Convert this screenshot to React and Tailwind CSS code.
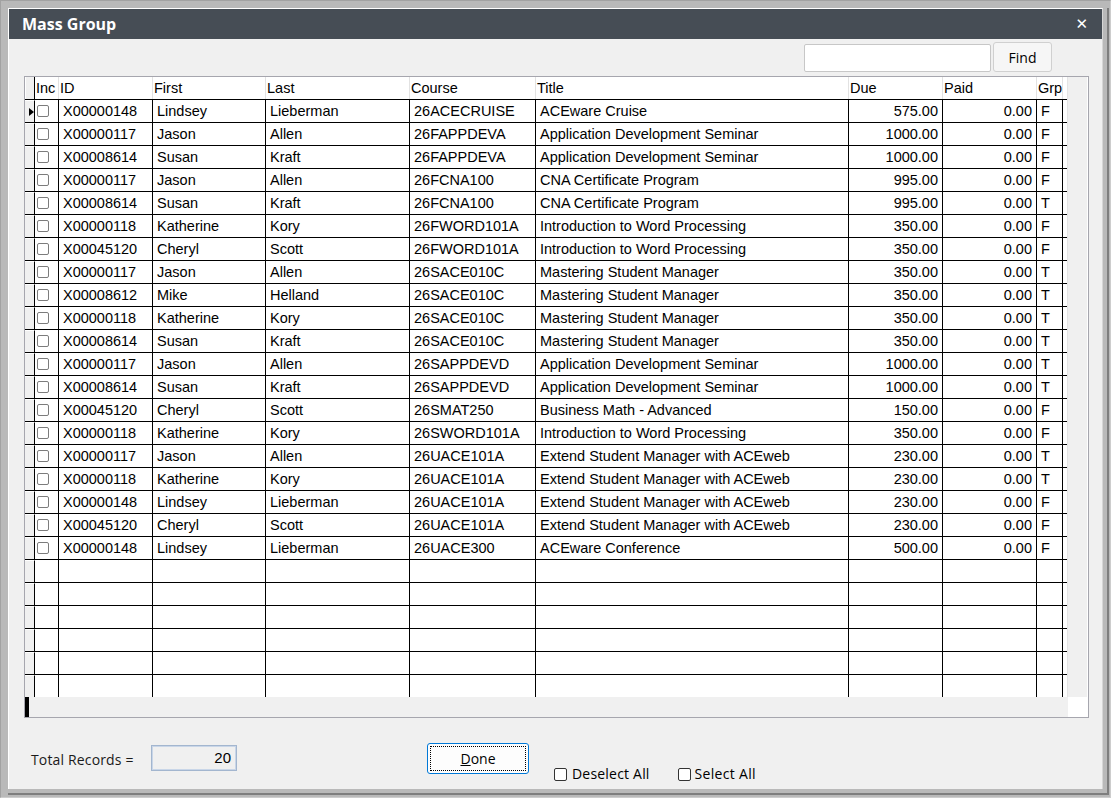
import React from 'react';

const rows = [
  ['X00000148', 'Lindsey', 'Lieberman', '26ACECRUISE', 'ACEware Cruise', '575.00', '0.00', 'F'],
  ['X00000117', 'Jason', 'Allen', '26FAPPDEVA', 'Application Development Seminar', '1000.00', '0.00', 'F'],
  ['X00008614', 'Susan', 'Kraft', '26FAPPDEVA', 'Application Development Seminar', '1000.00', '0.00', 'F'],
  ['X00000117', 'Jason', 'Allen', '26FCNA100', 'CNA Certificate Program', '995.00', '0.00', 'F'],
  ['X00008614', 'Susan', 'Kraft', '26FCNA100', 'CNA Certificate Program', '995.00', '0.00', 'T'],
  ['X00000118', 'Katherine', 'Kory', '26FWORD101A', 'Introduction to Word Processing', '350.00', '0.00', 'F'],
  ['X00045120', 'Cheryl', 'Scott', '26FWORD101A', 'Introduction to Word Processing', '350.00', '0.00', 'F'],
  ['X00000117', 'Jason', 'Allen', '26SACE010C', 'Mastering Student Manager', '350.00', '0.00', 'T'],
  ['X00008612', 'Mike', 'Helland', '26SACE010C', 'Mastering Student Manager', '350.00', '0.00', 'T'],
  ['X00000118', 'Katherine', 'Kory', '26SACE010C', 'Mastering Student Manager', '350.00', '0.00', 'T'],
  ['X00008614', 'Susan', 'Kraft', '26SACE010C', 'Mastering Student Manager', '350.00', '0.00', 'T'],
  ['X00000117', 'Jason', 'Allen', '26SAPPDEVD', 'Application Development Seminar', '1000.00', '0.00', 'T'],
  ['X00008614', 'Susan', 'Kraft', '26SAPPDEVD', 'Application Development Seminar', '1000.00', '0.00', 'T'],
  ['X00045120', 'Cheryl', 'Scott', '26SMAT250', 'Business Math - Advanced', '150.00', '0.00', 'F'],
  ['X00000118', 'Katherine', 'Kory', '26SWORD101A', 'Introduction to Word Processing', '350.00', '0.00', 'F'],
  ['X00000117', 'Jason', 'Allen', '26UACE101A', 'Extend Student Manager with ACEweb', '230.00', '0.00', 'T'],
  ['X00000118', 'Katherine', 'Kory', '26UACE101A', 'Extend Student Manager with ACEweb', '230.00', '0.00', 'T'],
  ['X00000148', 'Lindsey', 'Lieberman', '26UACE101A', 'Extend Student Manager with ACEweb', '230.00', '0.00', 'F'],
  ['X00045120', 'Cheryl', 'Scott', '26UACE101A', 'Extend Student Manager with ACEweb', '230.00', '0.00', 'F'],
  ['X00000148', 'Lindsey', 'Lieberman', '26UACE300', 'ACEware Conference', '500.00', '0.00', 'F'],
];

// column widths include the 1px right grid line
const cols = [
  { label: 'ID', w: 'w-[94px]' },
  { label: 'First', w: 'w-[113px]' },
  { label: 'Last', w: 'w-[144px]' },
  { label: 'Course', w: 'w-[126px]' },
  { label: 'Title', w: 'w-[313px]' },
  { label: 'Due', w: 'w-[94px]', right: true },
  { label: 'Paid', w: 'w-[94px]', right: true },
  { label: 'Grp', w: 'w-[26px]' },
];

const CheckBox = () => (
  <span className="block w-[12px] h-[12px] rounded-[2px] border border-[#7c7c7c] bg-white" />
);

const GridRow = ({ data, current }) => (
  <div className="flex h-[23px] shrink-0 border-b border-black">
    <div className="w-[10px] shrink-0 border-r border-black bg-[#f0f0f0] border-t border-t-white flex items-center justify-end">
      {current && <span className="block w-0 h-0 border-l-[5px] border-l-black border-y-[4px] border-y-transparent" />}
    </div>
    <div className="w-[24px] shrink-0 border-r border-black flex items-center pl-[2px]">
      {data && <CheckBox />}
    </div>
    {cols.map((c, i) => (
      <div
        key={c.label}
        className={`${c.w} shrink-0 border-r border-black flex items-center pt-[2px] overflow-hidden whitespace-nowrap ${c.right ? 'justify-end pr-[4px]' : 'pl-[4px]'}`}
      >
        {data ? data[i] : ''}
      </div>
    ))}
    <div className="w-[4px] shrink-0" />
  </div>
);

export default function App() {
  return (
    <div className="w-[1111px] h-[798px] bg-[#b9b9b9] border-l border-t border-[#a2a2a2] border-r border-b border-r-[#cdcdcd] border-b-[#cdcdcd] pl-[7px] pt-[7px] pr-[1px] pb-[2px] flex">
      <div className="flex-1 flex border-r-2 border-b-2 border-[#7e7e7e] pr-[4px] pb-[4px]">
        <div className="flex-1 flex flex-col border-l border-t border-white border-r border-r-[#d6d6d6] bg-[#f0f0f0]">
          {/* Title bar */}
          <div className="h-[30px] shrink-0 bg-[#464d55] flex items-center justify-between pl-[13px] pr-[14px]">
            <span className="text-white font-bold text-[16px] font-['Open_Sans',sans-serif] leading-none">Mass Group</span>
            <span className="text-white font-bold text-[15px] font-['DejaVu_Sans',sans-serif] leading-none">✕</span>
          </div>

          {/* Find row */}
          <div className="flex items-end justify-end pt-[3px] pr-[50px] h-[33px] shrink-0">
            <input className="w-[187px] h-[28px] bg-white border border-[#c7c7c7] rounded-[2px] outline-none" />
            <button className="ml-[2px] w-[59px] h-[30px] bg-[#f6f6f6] border border-[#d0d0d0] rounded-[3px] text-[14px] text-black font-['Open_Sans',sans-serif]">
              Find
            </button>
          </div>

          {/* Grid */}
          <div className="mt-[4px] ml-[15px] mr-[13px] h-[642px] shrink-0 border border-[#a6a6ae] flex flex-col font-['Liberation_Sans',Arial,sans-serif] text-[14.5px] text-black">
            <div className="flex h-[620px] shrink-0">
              <div className="w-[1042px] shrink-0 bg-white overflow-hidden flex flex-col">
                <div className="flex h-[23px] shrink-0 border-b border-black">
                  <div className="w-[10px] shrink-0 border-r border-black bg-[#f0f0f0] border-l border-l-white" />
                  <div className="w-[24px] shrink-0 border-r border-[#e2e2e2] flex items-center pt-[2px] pl-[1px]">Inc</div>
                  {cols.map((c) => (
                    <div key={c.label} className={`${c.w} shrink-0 border-r border-[#e2e2e2] flex items-center pt-[2px] pl-[1px]`}>
                      {c.label}
                    </div>
                  ))}
                  <div className="w-[4px] shrink-0" />
                </div>
                {rows.map((r, i) => (
                  <GridRow key={i} data={r} current={i === 0} />
                ))}
                {[0, 1, 2, 3, 4, 5].map((i) => (
                  <GridRow key={'e' + i} />
                ))}
              </div>
              <div className="flex-1 bg-[#f0f0f0] border-l border-[#e4e4e4] border-r border-r-white" />
            </div>
            <div className="flex flex-1">
              <div className="flex-1 bg-[#f0f0f0] flex">
                <div className="w-[4px] bg-black" />
              </div>
              <div className="w-[20px] bg-white" />
            </div>
          </div>

          {/* Bottom bar */}
          <div className="flex items-start pl-[22px] font-['Open_Sans',sans-serif] text-[14px] text-black">
            <span className="w-[120px] mt-[32px] leading-[20px] text-[#1a1a1a] tracking-[0.15px]">Total Records =</span>
            <div className="mt-[27px] w-[86px] h-[26px] border border-[#a3b6cf] shadow-[inset_0_0_0_1px_#c9d6e8] bg-[#f0f0f0] flex items-center justify-end pr-[5px] font-['Liberation_Sans',Arial,sans-serif] text-[15px]">
              20
            </div>
            <button className="ml-[190px] mt-[25px] w-[102px] h-[31px] border border-[#0078d7] rounded-[3px] bg-[#fdfdfd] p-[2px]">
              <span className="h-full w-full flex items-center justify-center border border-dotted border-black leading-none">
                <span><span className="underline">D</span>one</span>
              </span>
            </button>
            <label className="ml-[25px] mt-[46px] flex items-center leading-[20px]">
              <span className="block w-[13px] h-[13px] border border-[#333] rounded-[2px] bg-white" />
              <span className="ml-[5px] tracking-[0.2px]">Deselect All</span>
            </label>
            <label className="ml-[28px] mt-[46px] flex items-center leading-[20px]">
              <span className="block w-[13px] h-[13px] border border-[#333] rounded-[2px] bg-white" />
              <span className="ml-[4px] tracking-[0.3px]">Select All</span>
            </label>
          </div>
        </div>
      </div>
    </div>
  );
}
